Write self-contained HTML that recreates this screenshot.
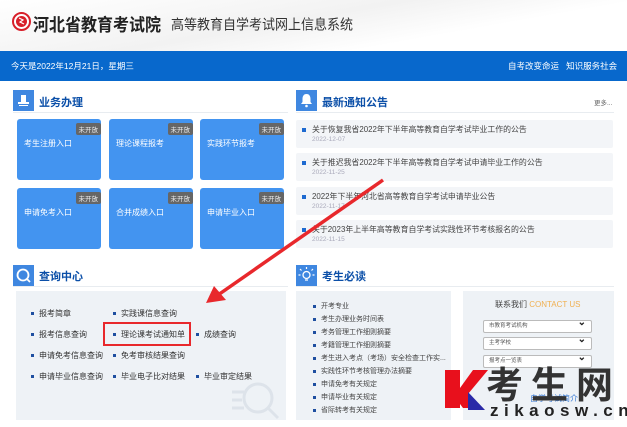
<!DOCTYPE html>
<html><head><meta charset="utf-8"><style>
*{margin:0;padding:0;box-sizing:border-box}
body{width:627px;height:427px;overflow:hidden;background:#fff;font-family:"Liberation Sans","Noto Sans CJK SC",sans-serif;position:relative}
.a{position:absolute}
.hdr{left:0;top:0;width:627px;height:51px;background:linear-gradient(170deg,#fff 0%,#f2f2f2 45%,#fff 70%)}
.bar{left:0;top:51px;width:627px;height:30px;background:#0868cc;color:#fff;font-size:8.5px;line-height:30px}
.ic{width:21px;height:21px;background:#3f87e0}
.tt{font-size:11px;color:#0b4fa8;font-weight:bold}
.ln{height:1px;background:#e8ecf0}
.tile{width:84px;height:61px;background:#4394f0;border-radius:3px;color:#fff;font-size:8px}
.tile span{position:absolute;left:7px;top:19px}
.tile b{position:absolute;right:0;top:4px;background:#666;color:#eee;font-size:6.5px;font-weight:normal;padding:1px 3px;border-radius:2px}
.nc{left:296px;width:317px;height:28px;background:#f3f5f8;border-radius:2px;font-size:7.9px;color:#444}
.nc i{position:absolute;left:6px;top:8px;width:4px;height:4px;background:#1e6ad0}
.nc span{position:absolute;left:16px;top:4px;white-space:nowrap}
.nc em{position:absolute;left:16px;top:16px;font-style:normal;font-size:6.5px;color:#aab}
.q{font-size:8px;color:#333;white-space:nowrap}
.q:before{content:"";display:inline-block;width:3px;height:3px;background:#1e4fa0;margin-right:5px;vertical-align:middle}
.r{font-size:7px;color:#444;white-space:nowrap}
.r:before{content:"";display:inline-block;width:3px;height:3px;background:#1e4fa0;margin-right:5px;vertical-align:middle}
.sel{left:483px;width:109px;height:13px;background:#fff;border:1px solid #bbb;border-radius:2px;font-size:5.5px;color:#555;line-height:11px;padding-left:5px}
.sel:after{content:"⌄";position:absolute;right:5px;top:-4px;font-size:10px;font-weight:bold;color:#222}
</style></head><body>
<div class="a hdr"></div>
<svg class="a" style="left:12px;top:12px" width="19" height="19" viewBox="0 0 19 19"><circle cx="9.5" cy="9.5" r="8.5" fill="#fff" stroke="#d8202a" stroke-width="2"/><circle cx="9.5" cy="9.5" r="5.5" fill="#d8202a"/><path d="M7 6l4 2-3 2 4 2" stroke="#fff" stroke-width="1.2" fill="none"/></svg>
<div class="a" style="left:33px;top:10px;font-size:16px;font-weight:bold;color:#222;transform:scaleY(1.1);transform-origin:0 0;white-space:nowrap">河北省教育考试院</div>
<div class="a" style="left:171px;top:13px;font-size:13px;color:#333;transform:scaleY(1.1);transform-origin:0 0;white-space:nowrap">高等教育自学考试网上信息系统</div>
<div class="a bar"><span style="position:absolute;left:11px">今天是2022年12月21日，星期三</span><span style="position:absolute;left:508px">自考改变命运&nbsp;&nbsp;&nbsp;知识服务社会</span></div>

<div class="a ic" style="left:13px;top:90px"><svg width="21" height="21"><rect x="8" y="5" width="5" height="7" fill="#fff"/><rect x="5" y="12" width="11" height="2" fill="#fff"/><rect x="6" y="15" width="9" height="1" fill="#fff"/></svg></div>
<div class="a tt" style="left:39px;top:94px">业务办理</div>
<div class="a ln" style="left:13px;top:112px;width:275px"></div>
<div class="a tile" style="left:17px;top:119px"><span>考生注册入口</span><b>未开放</b></div>
<div class="a tile" style="left:109px;top:119px"><span>理论课程报考</span><b>未开放</b></div>
<div class="a tile" style="left:200px;top:119px"><span>实践环节报考</span><b>未开放</b></div>
<div class="a tile" style="left:17px;top:188px"><span>申请免考入口</span><b>未开放</b></div>
<div class="a tile" style="left:109px;top:188px"><span>合并成绩入口</span><b>未开放</b></div>
<div class="a tile" style="left:200px;top:188px"><span>申请毕业入口</span><b>未开放</b></div>

<div class="a ic" style="left:296px;top:90px"><svg width="21" height="21"><path d="M10.5 4c-3 0-4 2.5-4 5v3l-1.5 2h11l-1.5-2v-3c0-2.5-1-5-4-5z" fill="#fff"/><circle cx="10.5" cy="16" r="1.3" fill="#fff"/></svg></div>
<div class="a tt" style="left:322px;top:94px">最新通知公告</div>
<div class="a" style="left:594px;top:97px;font-size:6.5px;color:#666">更多...</div>
<div class="a ln" style="left:296px;top:112px;width:318px"></div>
<div class="a nc" style="top:120px"><i></i><span>关于恢复我省2022年下半年高等教育自学考试毕业工作的公告</span><em>2022-12-07</em></div>
<div class="a nc" style="top:153px"><i></i><span>关于推迟我省2022年下半年高等教育自学考试申请毕业工作的公告</span><em>2022-11-25</em></div>
<div class="a nc" style="top:187px"><i></i><span>2022年下半年河北省高等教育自学考试申请毕业公告</span><em>2022-11-17</em></div>
<div class="a nc" style="top:220px"><i></i><span>关于2023年上半年高等教育自学考试实践性环节考核报名的公告</span><em>2022-11-15</em></div>

<div class="a ic" style="left:13px;top:265px"><svg width="21" height="21"><circle cx="10" cy="10" r="5.5" stroke="#fff" stroke-width="1.8" fill="none"/><path d="M14 14l3 3" stroke="#fff" stroke-width="1.8"/></svg></div>
<div class="a tt" style="left:39px;top:268px">查询中心</div>
<div class="a ln" style="left:13px;top:286px;width:275px"></div>
<div class="a" style="left:16px;top:291px;width:270px;height:129px;background:#eef2f6"></div>
<svg class="a" style="left:228px;top:378px" width="52" height="42"><circle cx="30" cy="20" r="14" stroke="#dde3ea" stroke-width="3" fill="none"/><path d="M40 30l10 10M4 14h12M4 22h10M4 30h12" stroke="#dde3ea" stroke-width="3"/></svg>
<div class="a q" style="left:31px;top:308px">报考简章</div>
<div class="a q" style="left:113px;top:308px">实践课信息查询</div>
<div class="a q" style="left:31px;top:329px">报考信息查询</div>
<div class="a q" style="left:113px;top:329px">理论课考试通知单</div>
<div class="a q" style="left:196px;top:329px">成绩查询</div>
<div class="a q" style="left:31px;top:350px">申请免考信息查询</div>
<div class="a q" style="left:113px;top:350px">免考审核结果查询</div>
<div class="a q" style="left:31px;top:371px">申请毕业信息查询</div>
<div class="a q" style="left:113px;top:371px">毕业电子比对结果</div>
<div class="a q" style="left:196px;top:371px">毕业审定结果</div>
<div class="a" style="left:103px;top:322px;width:88px;height:24px;border:2px solid #e8282c"></div>

<div class="a ic" style="left:296px;top:265px"><svg width="21" height="21"><circle cx="10.5" cy="10" r="3.5" stroke="#fff" stroke-width="1.3" fill="none"/><path d="M9 15h3M10.5 2v2M4 4l1.5 1.5M17 4l-1.5 1.5M2.5 10h2M16.5 10h2" stroke="#fff" stroke-width="1.2"/></svg></div>
<div class="a tt" style="left:322px;top:268px">考生必读</div>
<div class="a ln" style="left:296px;top:286px;width:318px"></div>
<div class="a" style="left:296px;top:291px;width:155px;height:129px;background:#eef2f6"></div>
<div class="a" style="left:463px;top:291px;width:151px;height:129px;background:#eef2f6"></div>
<div class="a r" style="left:313px;top:301px">开考专业</div>
<div class="a r" style="left:313px;top:314px">考生办理业务时间表</div>
<div class="a r" style="left:313px;top:327px">考务管理工作细则摘要</div>
<div class="a r" style="left:313px;top:340px">考籍管理工作细则摘要</div>
<div class="a r" style="left:313px;top:353px">考生进入考点（考场）安全检查工作实...</div>
<div class="a r" style="left:313px;top:366px">实践性环节考核管理办法摘要</div>
<div class="a r" style="left:313px;top:379px">申请免考有关规定</div>
<div class="a r" style="left:313px;top:392px">申请毕业有关规定</div>
<div class="a r" style="left:313px;top:405px">省际转考有关规定</div>
<div class="a" style="left:495px;top:299px;font-size:8px;color:#444;white-space:nowrap">联系我们 <span style="color:#f0b050">CONTACT US</span></div>
<div class="a sel" style="top:320px">市教育考试机构</div>
<div class="a sel" style="top:337px">主考学校</div>
<div class="a sel" style="top:355px">报考点一览表</div>
<div class="a" style="left:530px;top:393px;font-size:8px;color:#3a7bd5">自学考试简介</div>

<svg class="a" style="left:443px;top:368px" width="45" height="45"><polygon points="2,2 17,2 17,20 30,2 45,2 25,26 40,40 20,40 17,36 17,40 2,40" fill="#e8101c"/><polygon points="25,24 25,42 42,42" fill="#2a2aa8"/></svg>
<div class="a" style="left:486px;top:360px;font-size:37px;font-weight:bold;color:#333;letter-spacing:8px;white-space:nowrap;font-family:'Noto Sans CJK SC',sans-serif;line-height:44px">考生网</div>
<div class="a" style="left:490px;top:401px;font-size:17px;font-weight:bold;color:#222;letter-spacing:5.5px;white-space:nowrap">zikaosw.cn</div>

<svg class="a" style="left:0;top:0" width="627" height="427"><path d="M383 180L218 295" stroke="#e8282c" stroke-width="3.5"/><polygon points="206,303 214,286 226,300" fill="#e8282c"/></svg>
</body></html>
